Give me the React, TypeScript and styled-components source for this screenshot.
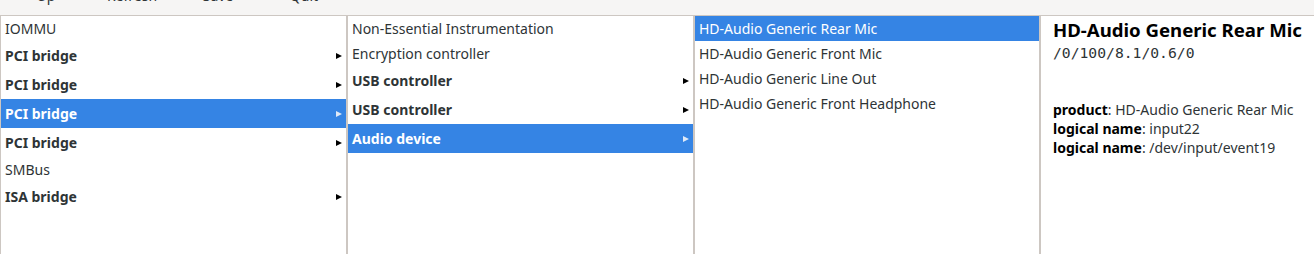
import React from "react";
import styled, { createGlobalStyle } from "styled-components";

const GlobalStyle = createGlobalStyle`
  html, body {
    margin: 0;
    padding: 0;
    background: #ffffff;
  }
  body {
    font-family: "Noto Sans", "Open Sans", sans-serif;
    font-size: 14px;
    color: #2e3436;
  }
`;

const Window = styled.div`
  width: 1314px;
  height: 254px;
  display: flex;
  flex-direction: column;
  overflow: hidden;
  background: #ffffff;
`;

// toolbar is scrolled mostly out of view: only the label bottoms show
const Toolbar = styled.div`
  height: 15px;
  flex: none;
  display: flex;
  align-items: flex-end;
  padding-left: 3px;
  background: #f6f5f4;
  border-bottom: 1px solid #cdc7c2;
  overflow: hidden;
`;

const ToolButton = styled.div`
  width: 86px;
  text-align: center;
  line-height: 20px;
  margin-bottom: 9px;
  color: #2e3436;
  flex: none;
`;

const Panes = styled.div`
  flex: 1;
  display: flex;
  border-left: 1px solid #cdc7c2;
  min-height: 0;
`;

const Column = styled.div<{ $width: number }>`
  width: ${(p) => p.$width}px;
  flex: none;
  display: flex;
  flex-direction: column;
  background: #ffffff;
  border-right: 2px solid #cdc7c2;
`;

const Row = styled.div<{ $bold?: boolean; $branch?: boolean; $selected?: boolean }>`
  height: ${(p) => (p.$branch ? 29 : 25)}px;
  flex: none;
  display: flex;
  align-items: center;
  justify-content: space-between;
  padding: 0 4px;
  font-weight: ${(p) => (p.$bold ? 700 : 400)};
  background: ${(p) => (p.$selected ? "#3584e4" : "transparent")};
  color: ${(p) => (p.$selected ? "#ffffff" : "#2e3436")};
  white-space: nowrap;
`;

const Arrow = styled.span<{ $selected?: boolean }>`
  width: 0;
  height: 0;
  border-top: 3.5px solid transparent;
  border-bottom: 3.5px solid transparent;
  border-left: 6px solid ${(p) => (p.$selected ? "#dfe9f7" : "#000000")};
`;

const Detail = styled.div`
  flex: 1;
  padding: 0 12px;
  background: #ffffff;
  white-space: nowrap;
`;

const Title = styled.div`
  margin-top: 1px;
  font-size: 18.6px;
  font-weight: 700;
  line-height: 26px;
  color: #000000;
`;

const Path = styled.div`
  font-family: "DejaVu Sans Mono", monospace;
  font-size: 14.7px;
  line-height: 18px;
  margin-top: 1px;
  color: #2e3436;
`;

const Props = styled.div`
  margin-top: 38px;
  display: flex;
  flex-direction: column;
`;

const Prop = styled.div`
  line-height: 19px;
  color: #2e3436;

  b {
    color: #000000;
  }
`;

type Item = { label: string; branch?: boolean; selected?: boolean };

const col1: Item[] = [
  { label: "IOMMU" },
  { label: "PCI bridge", branch: true },
  { label: "PCI bridge", branch: true },
  { label: "PCI bridge", branch: true, selected: true },
  { label: "PCI bridge", branch: true },
  { label: "SMBus" },
  { label: "ISA bridge", branch: true },
];

const col2: Item[] = [
  { label: "Non-Essential Instrumentation" },
  { label: "Encryption controller" },
  { label: "USB controller", branch: true },
  { label: "USB controller", branch: true },
  { label: "Audio device", branch: true, selected: true },
];

const col3: Item[] = [
  { label: "HD-Audio Generic Rear Mic", selected: true },
  { label: "HD-Audio Generic Front Mic" },
  { label: "HD-Audio Generic Line Out" },
  { label: "HD-Audio Generic Front Headphone" },
];

const ItemColumn: React.FC<{ items: Item[]; width: number }> = ({ items, width }) => (
  <Column $width={width}>
    {items.map((it, i) => (
      <Row key={i} $bold={it.branch} $branch={it.branch} $selected={it.selected}>
        <span>{it.label}</span>
        {it.branch && <Arrow $selected={it.selected} />}
      </Row>
    ))}
  </Column>
);

export default function App() {
  return (
    <>
      <GlobalStyle />
      <Window>
        <Toolbar>
          <ToolButton>Up</ToolButton>
          <ToolButton>Refresh</ToolButton>
          <ToolButton>Save</ToolButton>
          <ToolButton>Quit</ToolButton>
        </Toolbar>
        <Panes>
          <ItemColumn items={col1} width={345} />
          <ItemColumn items={col2} width={345} />
          <ItemColumn items={col3} width={344} />
          <Detail>
            <Title>HD-Audio Generic Rear Mic</Title>
            <Path>/0/100/8.1/0.6/0</Path>
            <Props>
              <Prop>
                <b>product</b>: HD-Audio Generic Rear Mic
              </Prop>
              <Prop>
                <b>logical name</b>: input22
              </Prop>
              <Prop>
                <b>logical name</b>: /dev/input/event19
              </Prop>
            </Props>
          </Detail>
        </Panes>
      </Window>
    </>
  );
}
